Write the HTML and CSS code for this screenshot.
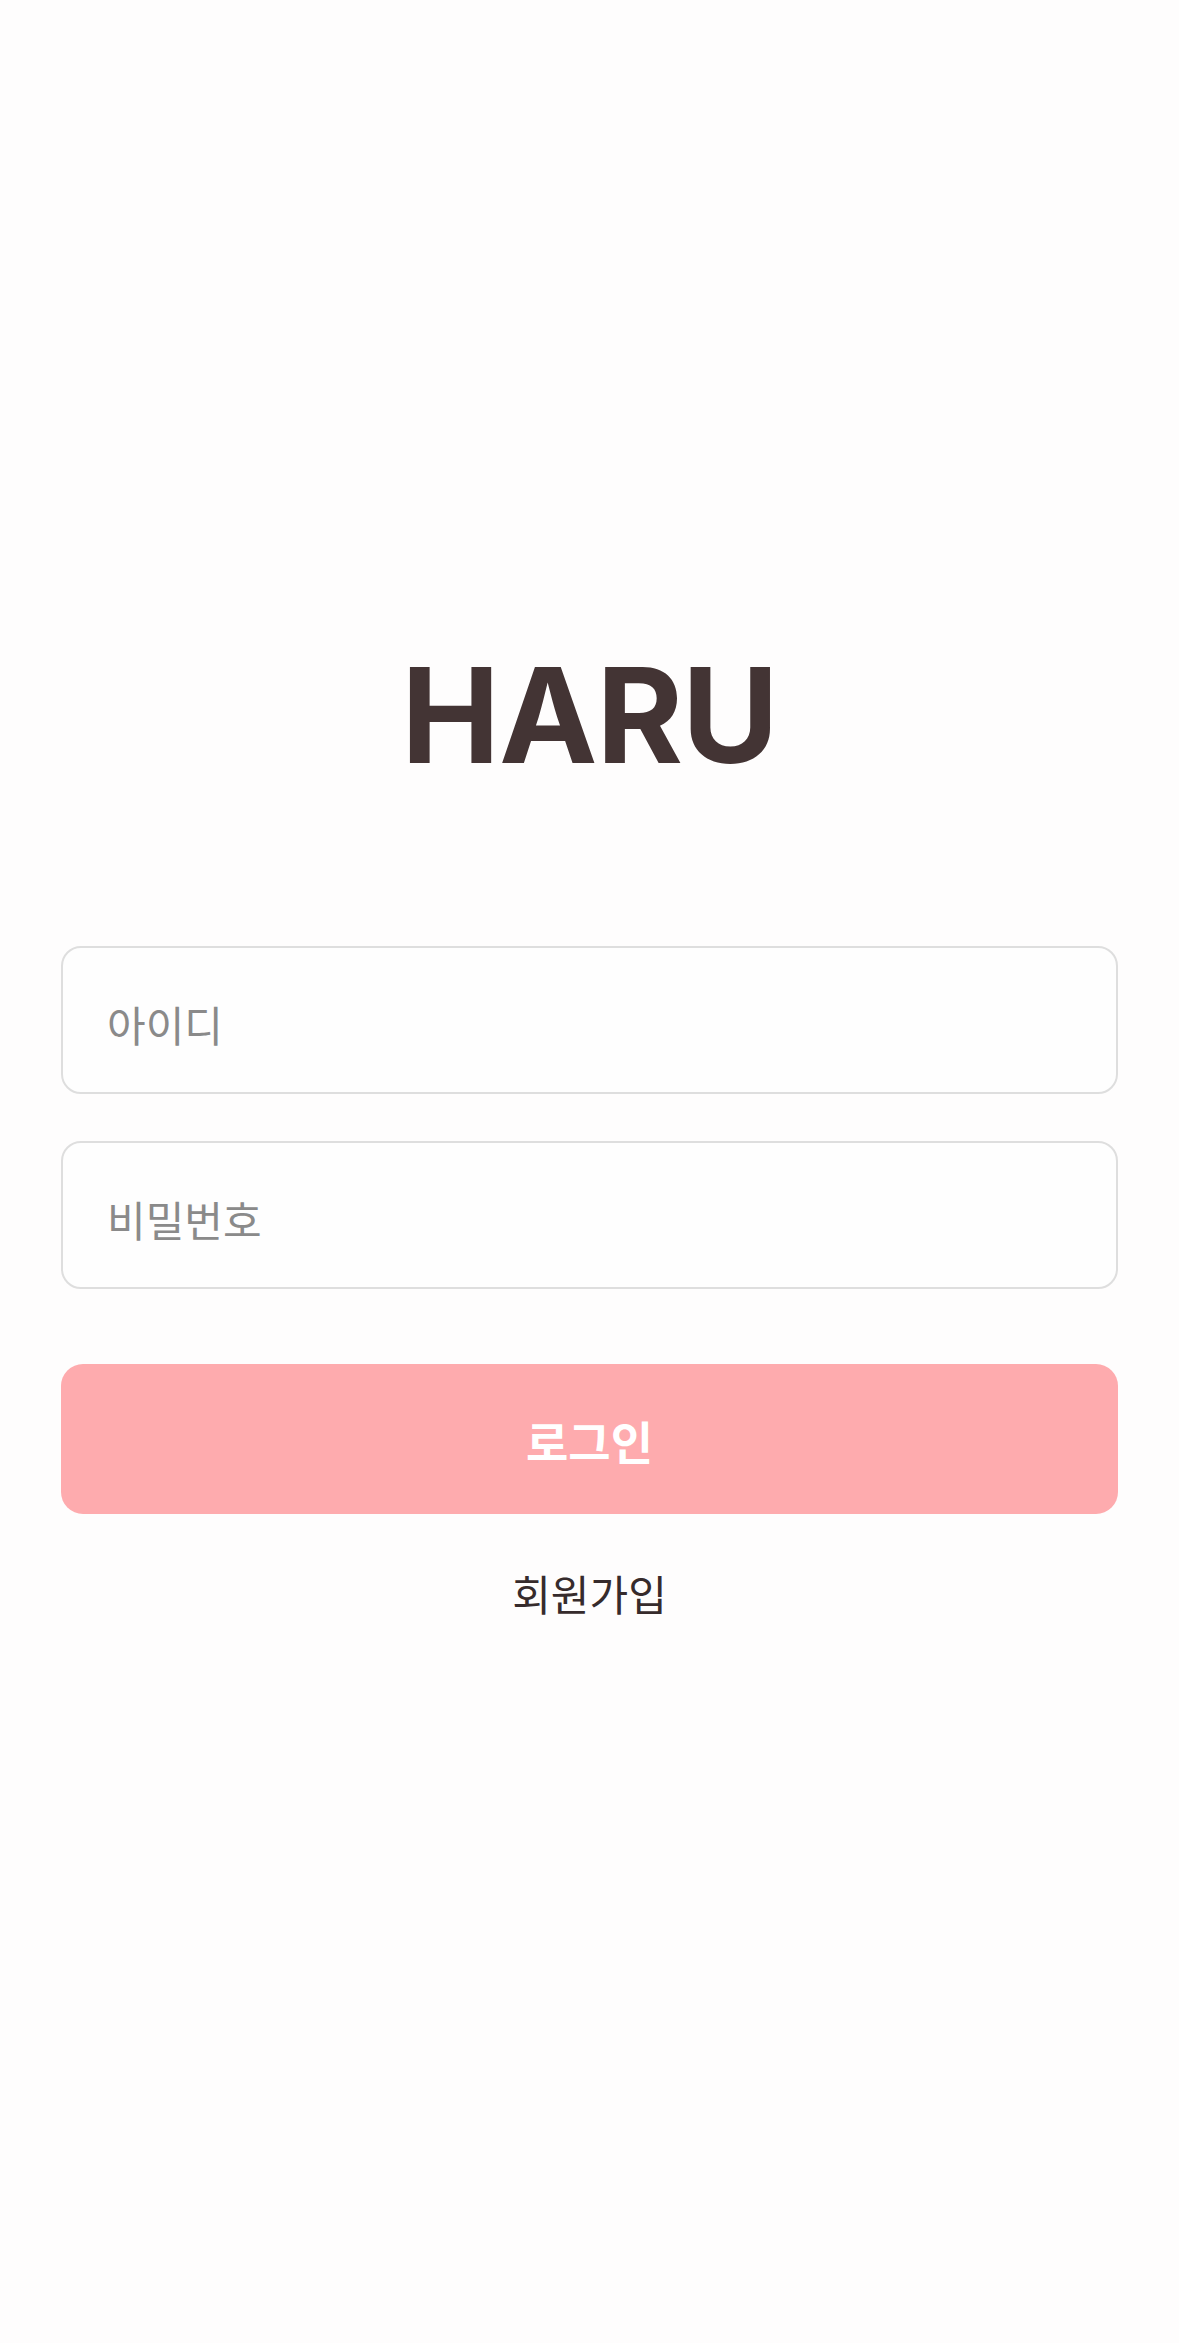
FILE: index.html
```html
<!DOCTYPE html>
<html lang="ko">
<head>
<meta charset="utf-8">
<title>HARU</title>
<link rel="stylesheet" href="styles.css">
</head>
<body>
<main class="login">
  <h1 class="logo">HARU</h1>
  <form class="form">
    <input class="field" type="text" placeholder="아이디">
    <input class="field field-pw" type="password" placeholder="비밀번호">
    <button class="submit" type="button">로그인</button>
  </form>
  <a class="signup" href="#">회원가입</a>
</main>
</body>
</html>
```

FILE: styles.css
```css
* { box-sizing: border-box; }

html, body {
  margin: 0;
  padding: 0;
  background: #fefdfd;
}

body {
  width: 1179px;
  height: 2343px;
  font-family: "Noto Sans CJK KR", "Noto Sans", sans-serif;
}

.login {
  display: flex;
  flex-direction: column;
  align-items: stretch;
  padding: 635px 61px 0 61px;
}

.logo {
  margin: 0;
  font-family: Inter, "Noto Sans", sans-serif;
  font-weight: 700;
  font-size: 132px;
  line-height: 160px;
  letter-spacing: -1px;
  color: #433434;
  text-align: center;
}

.form {
  display: flex;
  flex-direction: column;
  margin-top: 151px;
}

.field {
  height: 148px;
  border: 2px solid #dedede;
  border-radius: 20px;
  background: #fefefe;
  padding: 6px 0 0 44px;
  font-family: "Noto Sans CJK KR", sans-serif;
  font-size: 42px;
  color: #333;
  outline: none;
}

.field::placeholder {
  color: #8a8a8a;
}

.field-pw {
  margin-top: 47px;
}

.submit {
  margin-top: 75px;
  height: 150px;
  border: none;
  border-radius: 22px;
  background: #feabae;
  color: #ffffff;
  font-family: "Noto Sans CJK KR", sans-serif;
  font-weight: 700;
  font-size: 46px;
  padding-top: 2px;
}

.signup {
  align-self: center;
  margin-top: 48px;
  font-family: "Noto Sans CJK KR", sans-serif;
  font-size: 42px;
  color: #362b2c;
  text-decoration: none;
}
```
